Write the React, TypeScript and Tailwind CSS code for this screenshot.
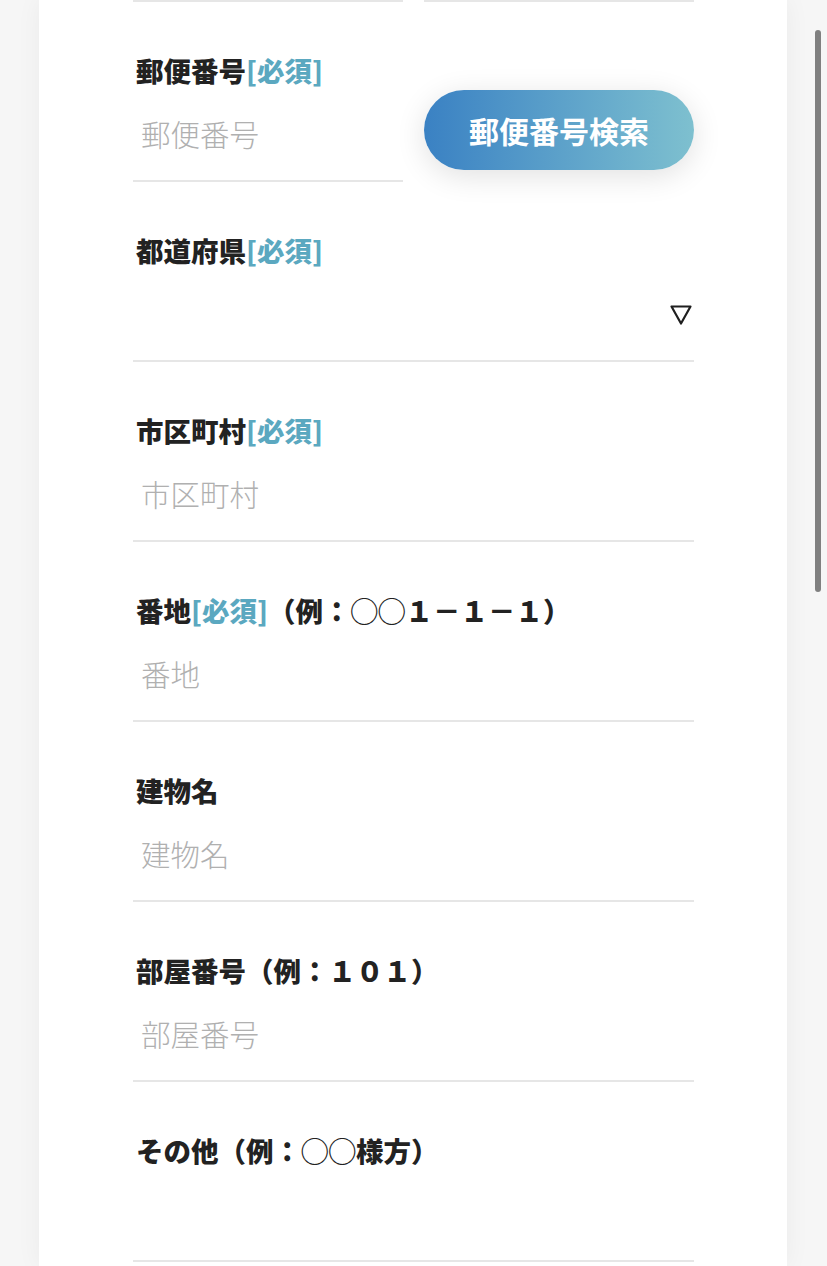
import React from "react";

const font = { fontFamily: '"Noto Sans CJK JP", "Noto Sans", sans-serif' };

function Req() {
  return <span className="text-[#5ba8c0]">[必須]</span>;
}

function Label({ children }: { children: React.ReactNode }) {
  return (
    <div className="h-[39px] pl-[3px] text-[27.5px] font-black leading-[39px] text-[#222] whitespace-nowrap">
      {children}
    </div>
  );
}

function TextInput({ placeholder }: { placeholder?: string }) {
  return (
    <input
      type="text"
      placeholder={placeholder}
      className="mt-[13px] block h-[60px] w-full bg-transparent pl-[8px] text-[29.5px] font-light text-[#222] outline-none placeholder:text-[#b0b0b0]"
      style={font}
    />
  );
}

function Line() {
  return <div className="h-[2px] w-full bg-[#e6e6e6]" />;
}

function Field({ label, placeholder }: { label: React.ReactNode; placeholder?: string }) {
  return (
    <div>
      <div className="pt-[49px] pb-[17px]">
        <Label>{label}</Label>
        <TextInput placeholder={placeholder} />
      </div>
      <Line />
    </div>
  );
}

export default function App() {
  return (
    <div className="relative min-h-[1266px] w-full overflow-hidden bg-[#f6f6f6]" style={font}>
      <div className="ml-[39px] min-h-[1266px] w-[748px] bg-white pl-[94px] shadow-[0_0_24px_rgba(0,0,0,0.05)]">
        <div className="w-[561px]">
          {/* top lines of previous row */}
          <div className="grid grid-cols-2 gap-x-[21px]">
            <Line />
            <Line />
          </div>
          {/* postal code row */}
          <div className="grid grid-cols-2 items-start gap-x-[21px]">
            <div>
              <div className="pt-[49px] pb-[17px]">
                <Label>
                  郵便番号
                  <Req />
                </Label>
                <TextInput placeholder="郵便番号" />
              </div>
              <Line />
            </div>
            <button
              type="button"
              className="mt-[88px] flex h-[80px] w-full items-center justify-center rounded-full bg-gradient-to-r from-[#3a81c3] to-[#7ec0cf] text-[30px] font-bold text-white shadow-[0_6px_30px_rgba(0,0,0,0.12)]"
              style={font}
            >
              郵便番号検索
            </button>
          </div>
          {/* prefecture */}
          <div>
            <div className="pt-[49px] pb-[17px]">
              <Label>
                都道府県
                <Req />
              </Label>
              <div className="mt-[13px] flex h-[60px] items-center justify-end pr-[2px]">
                <svg className="mt-[4px]" width="22" height="20" viewBox="0 0 22 20" fill="none">
                  <path d="M1.5 1.5 H20.5 L11 18.5 Z" stroke="#1f1f1f" strokeWidth="2.2" strokeLinejoin="round" />
                </svg>
              </div>
            </div>
            <Line />
          </div>
          <Field
            label={
              <>
                市区町村
                <Req />
              </>
            }
            placeholder="市区町村"
          />
          <Field
            label={
              <>
                番地
                <Req />
                （例：◯◯１－１－１）
              </>
            }
            placeholder="番地"
          />
          <Field label="建物名" placeholder="建物名" />
          <Field label="部屋番号（例：１０１）" placeholder="部屋番号" />
          <Field label="その他（例：◯◯様方）" />
        </div>
      </div>
      {/* scrollbar overlay */}
      <div className="absolute right-[6px] top-[30px] h-[562px] w-[6px] rounded-full bg-[#808080]" />
    </div>
  );
}
